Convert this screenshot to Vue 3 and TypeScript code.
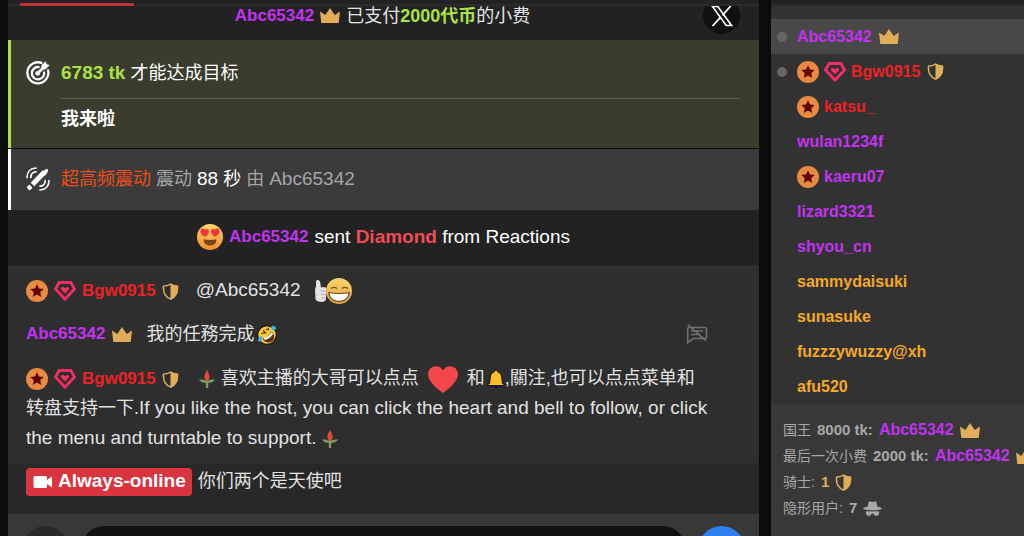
<script setup lang="ts">
interface User {
  name: string
  tone: 'purple' | 'red' | 'gold'
  dot?: boolean
  star?: boolean
  gem?: boolean
  role?: 'crown' | 'shield'
}

const users: User[] = [
  { name: 'Abc65342', tone: 'purple', dot: true, role: 'crown' },
  { name: 'Bgw0915', tone: 'red', dot: true, star: true, gem: true, role: 'shield' },
  { name: 'katsu_', tone: 'red', star: true },
  { name: 'wulan1234f', tone: 'purple' },
  { name: 'kaeru07', tone: 'purple', star: true },
  { name: 'lizard3321', tone: 'purple' },
  { name: 'shyou_cn', tone: 'purple' },
  { name: 'sammydaisuki', tone: 'gold' },
  { name: 'sunasuke', tone: 'gold' },
  { name: 'fuzzzywuzzy@xh', tone: 'gold' },
  { name: 'afu520', tone: 'gold' },
]
</script>

<template>
  <div class="page">
    <svg class="defs" aria-hidden="true">
      <symbol id="crown" viewBox="0 0 20 15">
        <path d="M0 3.500 5.300 7 10 0l4.700 7L20 3.500 18.700 15H1.300Z" fill="#e0ad58" />
      </symbol>
      <symbol id="shield" viewBox="0 0 17 17">
        <path d="M8.500 1.100c2.500 1.400 4.700 2 7 2.100.5 6-1.500 10.700-7 12.800C3 13.900 1 9.200 1.500 3.200c2.300-.1 4.500-.7 7-2.100Z" fill="none" stroke="#e0ad58" stroke-width="1.500" />
        <path d="M8.500.5c2.500 1.500 5 2 7.500 2.200.6 6.500-1.500 11.800-7.500 14Z" fill="#e0ad58" />
      </symbol>
      <symbol id="star" viewBox="0 0 22 22">
        <circle cx="11" cy="11" r="11" fill="#e88a41" />
        <path d="m11 4.300 2 4.200 4.700.5-3.500 3.200 1 4.700-4.200-2.300-4.200 2.300 1-4.700L4.300 9 9 8.500Z" fill="#620303" />
      </symbol>
      <symbol id="gem" viewBox="0 0 22 20">
        <path d="M5.200 1.500h11.600L20.500 8 11 18.200 1.500 8Z" fill="none" stroke="#f52e63" stroke-width="2.800" />
        <path d="M11 12.500 7 8.600C6 6.300 9.300 5 11 7.200c1.700-2.200 5-.9 4 1.400Z" fill="#f52e63" />
      </symbol>
      <symbol id="tulip" viewBox="0 0 16 18">
        <path d="M6.800 9h2.400v9H6.800Z" fill="#78a05b" />
        <path d="M0 9.500c3-.3 6 .3 8 1.500 2-1.200 5-1.800 8-1.500-1.500 2.500-4.500 3.700-8 3.500C4.500 13.200 1.500 12 0 9.500Z" fill="#78a05b" />
        <path d="M8 0c1.800 3 3.300 6 2.300 9L8 11.500 5.700 9C4.700 6 6.200 3 8 0Z" fill="#e2473d" />
      </symbol>
    </svg>

    <main class="chat">
      <div class="tabs"><span class="tab-active"></span></div>

      <section class="feed">
        <div class="row tip">
          <div class="tip-text">
            <a href="#" class="name purple">Abc65342</a>
            <svg class="i-crown"><use href="#crown" /></svg>
            <span>已支付<b class="lime">2000代币</b>的小费</span>
          </div>
          <button class="x-button" type="button" aria-label="X">
            <svg viewBox="0 0 24 24" width="24" height="24">
              <path d="M2.500 2.500h5.300L21.500 21.500h-5.300Z" fill="none" stroke="#fff" stroke-width="1.700" />
              <path d="m20.700 2-8.300 9.300M10.500 13.300 2.500 22" fill="none" stroke="#fff" stroke-width="1.800" />
            </svg>
          </button>
        </div>

        <div class="row notice goal">
          <svg class="notice-icon" viewBox="0 0 24 24">
            <g fill="none" stroke="#fff" stroke-width="2.300">
              <path d="M16.300 2.300A10.500 10.500 0 1 0 21.800 8.500" />
              <path d="M13.500 6.200A6.200 6.200 0 1 0 18 10.500" />
              <path d="M12 12 18.500 5.500" stroke-width="2.600" />
            </g>
            <circle cx="11.700" cy="12.300" r="2.400" fill="#fff" />
            <path d="m15 9 .6-5L19.800.2l.9 3 3 .9-4 4.100Z" fill="#fff" />
          </svg>
          <div class="notice-body">
            <p><b class="lime latin">6783 tk</b> 才能达成目标</p>
            <p class="goal-title">我来啦</p>
          </div>
        </div>

        <div class="row notice vibe">
          <svg class="notice-icon" viewBox="0 0 24 24">
            <path d="M6.500 17.500 18.500 5" fill="none" stroke="#fff" stroke-width="5" />
            <path d="M16 5.200 19.500 2.300c1.700-1.100 3.400.5 2.400 2.200L19.500 8.500Z" fill="#fff" />
            <path d="m3.400 17.600 3.200 3.200-2.300 2.100a1 1 0 0 1-1.400 0l-1.800-1.800a1 1 0 0 1 0-1.400Z" fill="#fff" />
            <g fill="none" stroke="#fff" stroke-width="1.700" stroke-linecap="round">
              <path d="M1 10.500C1 5 4.500 1.200 10 1M4.800 10.500c0-3.300 2.200-5.600 5.200-5.700" />
              <path d="M23 13.500c0 5.500-3.500 9.300-9 9.500M19.200 13.500c0 3.300-2.200 5.600-5.200 5.700" />
            </g>
          </svg>
          <p><span class="orange">超高频震动</span> 震动 <span class="white"><span class="latin">88</span> 秒</span> 由 <span class="latin">Abc65342</span></p>
        </div>

        <div class="row reaction">
          <svg class="i-face" viewBox="0 0 26 26">
            <defs>
              <linearGradient id="face" x2="0" y2="1">
                <stop offset="0" stop-color="#ffd864" />
                <stop offset="1" stop-color="#f28b35" />
              </linearGradient>
            </defs>
            <circle cx="13" cy="13" r="13" fill="url(#face)" />
            <path d="M8.500 12.700C5 11.500 3 9.500 3.500 6.500 4.200 3.800 7 4 7.900 5.800c1.500-1.600 4-.8 4.100 1.300.1 2.400-1.600 4.300-3.500 5.600ZM17.500 12.700c3.500-1.200 5.500-3.200 5-6.200-.7-2.700-3.500-2.500-4.400-.7-1.500-1.600-4-.8-4.100 1.300-.1 2.400 1.600 4.300 3.500 5.600Z" fill="#f1353b" />
            <path d="M6.800 15.200c4 1 8.400 1 12.400 0 .7 3.800-2.300 6.300-6.200 6.300s-6.900-2.500-6.200-6.300Z" fill="#7d4217" />
          </svg>
          <a href="#" class="name purple">Abc65342</a>
          <span class="latin">sent <b class="coral">Diamond</b> from Reactions</span>
        </div>

        <div class="row messages">
          <article class="message">
            <span class="author">
              <svg class="i-star"><use href="#star" /></svg>
              <svg class="i-gem"><use href="#gem" /></svg>
              <a href="#" class="name red">Bgw0915</a>
              <svg class="i-shield"><use href="#shield" /></svg>
            </span>
            <span class="latin">@Abc65342</span>
            <svg class="i-thumb" viewBox="0 0 38 27">
              <defs>
                <linearGradient id="grin" x2="0" y2="1">
                  <stop offset="0" stop-color="#fbd66c" />
                  <stop offset="1" stop-color="#e1a340" />
                </linearGradient>
              </defs>
              <path d="M1 12c0-2 1-2.500 1-4V4c0-3 4-2.500 4.200.5L7 9.500c4-1.500 6 .5 5.500 3l-.5 9c-.5 3.500-9 3-10.500 0Z" fill="#e2e2e2" />
              <path d="M7 13h5M7 16.500h5M7 20h5" stroke="#b5b5b5" stroke-width="1" />
              <circle cx="25" cy="13" r="13" fill="url(#grin)" />
              <path d="M17 10.500c2-1.500 4-1.500 6 0M28 10.500c2-1.500 4-1.500 6 0" fill="none" stroke="#79511b" stroke-width="1.400" />
              <path d="M14 14c7 1.200 15 1.200 22 0-.5 6-5 10-11 10s-10.500-4-11-10Z" fill="#6c421a" />
              <path d="M15.500 15.200c6 1 13 1 19 0-.9 5-4.500 7.600-9.500 7.600s-8.600-2.600-9.500-7.600Z" fill="#fff" />
            </svg>
          </article>

          <article class="message with-action">
            <div class="line">
              <a href="#" class="name purple">Abc65342</a>
              <svg class="i-crown"><use href="#crown" /></svg>
              <span class="line-text">我的任務完成<svg class="i-laugh" viewBox="0 0 20 20">
                <circle cx="10" cy="10" r="9.300" fill="#ffc83d" stroke="#16130d" stroke-width="1.200" />
                <path d="M5.500 13.500c4-.6 7.600-3.700 8.700-7.300 4 3.300 3.800 8.300.6 10.300-3.300 2-7.500.8-9.300-3Z" fill="#5a3314" />
                <path d="M6.500 13.300c4-1 6.700-3.200 8-6.200l1.500 2c-1.600 2.800-4.500 5-8 6Z" fill="#fff" />
                <path d="m4 8.500 4.500-.7-2.300-2.500M9 4.500l2.200.3.300-2.200" fill="none" stroke="#4c2a12" stroke-width="1.200" />
                <path d="M1 14.500c0-2 2-3.500 4-3 .6 2.500-.5 5-2.500 5.200C1.600 16.700 1 15.700 1 14.500ZM14.500 1.200c2-1 4.300.3 4.600 1.900.3 1.800-2.300 2.900-4.700 1.700Z" fill="#35b5e8" />
              </svg></span>
            </div>
            <button class="mute" type="button" aria-label="Mute">
              <svg viewBox="0 0 22 20" width="22" height="20">
                <path d="M3 3.500h16a1.500 1.500 0 0 1 1.500 1.500v8a1.500 1.500 0 0 1-1.500 1.500H7.500L1.700 18.500V5A1.500 1.500 0 0 1 3 3.500ZM5 7h12M5 10.500h9M2 .8l18 16" fill="none" stroke="#707070" stroke-width="1.700" />
              </svg>
            </button>
          </article>

          <article class="message">
            <span class="author">
              <svg class="i-star"><use href="#star" /></svg>
              <svg class="i-gem"><use href="#gem" /></svg>
              <a href="#" class="name red">Bgw0915</a>
              <svg class="i-shield"><use href="#shield" /></svg>
            </span>
            <svg class="i-tulip"><use href="#tulip" /></svg>
            <span>喜欢主播的大哥可以点点</span>
            <svg class="i-heart" viewBox="0 0 30 27">
              <path d="M15 27C8 22 0 15 0 8.200 0-.5 11.500-2.800 15 4.500 18.500-2.800 30-.5 30 8.200 30 15 22 22 15 27Z" fill="#f2484b" />
            </svg>
            <span>和</span><svg class="i-bell" viewBox="0 0 18 20">
              <path d="M9 1c1.300 0 1.900.8 1.900 1.800 3 .9 3.900 3.400 4 6.200l.5 4.700 1.600 1.500v1.500H1v-1.500l1.600-1.500L3.100 9c.1-2.800 1-5.300 4-6.200C7.100 1.800 7.700 1 9 1Z" fill="#fcbd2c" stroke="#17130b" stroke-width="1.200" />
              <path d="M6.500 17.200h5c-.3 2.400-4.700 2.400-5 0Z" fill="#17130b" />
            </svg><span>,關注,也可以点点菜单和</span><span>转盘支持一下.</span><span class="latin">If you like the host, you can click the heart and bell to follow, or click the menu and turntable to support.</span>
            <svg class="i-tulip"><use href="#tulip" /></svg>
          </article>
        </div>

        <div class="row status">
          <a href="#" class="badge latin">
            <svg viewBox="0 0 20 14" width="20" height="14">
              <path d="M2 1h10.500a1.500 1.500 0 0 1 1.500 1.500V5l5-3.500v11L14 9v2.500a1.500 1.500 0 0 1-1.500 1.500H2a1.500 1.500 0 0 1-1.500-1.500v-9A1.500 1.500 0 0 1 2 1Z" fill="#fff" />
            </svg>
            <span>Always-online</span>
          </a>
          <span>你们两个是天使吧</span>
        </div>
      </section>

      <form class="composer" @submit.prevent>
        <button class="round" type="button" aria-label="Menu"></button>
        <input class="entry" type="text" aria-label="Message" />
        <button class="round send" type="submit" aria-label="Send"></button>
      </form>
    </main>

    <aside class="side">
      <div class="side-top"></div>
      <ul class="users">
        <li v-for="user in users" :key="user.name" class="user">
          <span class="dot" :class="{ on: user.dot }"></span>
          <svg v-if="user.star" class="i-star"><use href="#star" /></svg>
          <svg v-if="user.gem" class="i-gem"><use href="#gem" /></svg>
          <a href="#" class="name" :class="user.tone">{{ user.name }}</a>
          <svg v-if="user.role" :class="'i-' + user.role"><use :href="'#' + user.role" /></svg>
        </li>
      </ul>
      <div class="summary">
        <p>国王 <b>8000 tk:</b> <a href="#" class="name purple">Abc65342</a><svg class="i-crown"><use href="#crown" /></svg></p>
        <p>最后一次小费 <b>2000 tk:</b> <a href="#" class="name purple">Abc65342</a><svg class="i-crown"><use href="#crown" /></svg></p>
        <p>骑士: <b class="amber">1</b><svg class="i-shield"><use href="#shield" /></svg></p>
        <p>隐形用户: <b>7</b><svg class="i-hat" viewBox="0 0 20 16">
          <path d="M6 .8C7.500-.2 8.500 1 10 1s2.500-1.200 4-.2L15.300 6c2.700.4 4.700 1 4.700 1.800C20 9 16 10 10 10S0 9 0 7.800C0 7 2 6.400 4.700 6Z" fill="#a8a8a8" />
          <path d="M3 11.200c2-.5 4.500-.5 6 0h2c1.500-.5 4-.5 6 0v1.500c0 4-5.500 4-6 .6H9c-.5 3.400-6 3.400-6-.6Z" fill="#a8a8a8" />
        </svg></p>
      </div>
    </aside>
  </div>
</template>

<style>
html,
body {
  margin: 0;
  background: #0b0b0b;
}
</style>

<style scoped>
.page {
  display: grid;
  grid-template-columns: minmax(0, 1fr) 253px;
  column-gap: 12px;
  padding-left: 8px;
  height: 100vh;
  box-sizing: border-box;
  overflow: hidden;
  color: #e2e2e2;
  font-family: "Liberation Sans", Arial, "Noto Sans CJK SC", sans-serif;
  font-size: 18px;
  line-height: 30px;
}
.defs { position: absolute; width: 0; height: 0; }
p, ul { margin: 0; padding: 0; }
button, input { border: 0; padding: 0; font: inherit; color: inherit; }
svg { flex: none; }

.chat {
  display: flex;
  flex-direction: column;
  min-height: 0;
  overflow: hidden;
}
.tabs {
  display: flex;
  align-items: flex-end;
  flex: none;
  height: 6px;
  padding-left: 12px;
  background: linear-gradient(#222 4px, #2b2b2b 4px);
}
.tab-active { width: 114px; height: 3px; background: #c23037; }
.feed {
  display: flex;
  flex: 1;
  flex-direction: column;
  justify-content: flex-end;
  min-height: 0;
  overflow: hidden;
}
.row { flex: none; }

.latin { font-size: 19px; }
.name { font-size: 17px; font-weight: bold; text-decoration: none; }
.purple { color: #c233f0; }
.red { color: #ed2225; }
.gold { color: #f5a828; }
.lime { color: #aae246; }
.coral { color: #ee4b57; }
.orange { color: #f04e14; }
.white { color: #fff; }

.i-crown { width: 20px; height: 15px; }
.i-shield { width: 17px; height: 17px; }
.i-star { width: 22px; height: 22px; }
.i-gem { width: 22px; height: 20px; }
.i-face { width: 26px; height: 26px; }
.i-thumb { width: 38px; height: 27px; margin-left: 13px; }
.i-laugh { width: 20px; height: 20px; margin-left: 3px; }
.i-tulip { width: 16px; height: 18px; margin: 0 6px 0 3px; }
.latin + .i-tulip { margin-left: 6px; }
.i-heart { width: 30px; height: 27px; margin: 0 9px; }
.i-bell { width: 18px; height: 20px; margin-left: 2px; }
.i-hat { width: 19px; height: 15px; }

.tip {
  display: flex;
  align-items: center;
  padding: 6px 19px 6px 54px;
  background: #222;
}
.tip-text {
  display: flex;
  align-items: center;
  justify-content: center;
  flex: 1;
  gap: 6px;
}
.x-button {
  display: grid;
  place-items: center;
  width: 37px;
  height: 37px;
  border-radius: 50%;
  background: #101010;
}

.notice {
  display: flex;
  gap: 11px;
  padding: 18px 19px 14px 15px;
  border-left: 3px solid;
}
.notice-icon { width: 24px; height: 24px; margin-top: 3px; }
.notice-body { flex: 1; }
.goal {
  color: #fff;
  background: #3a3c2d;
  border-color: #aadd4d;
}
.goal-title {
  margin-top: 10px;
  padding-top: 5px;
  border-top: 1px solid #5a5e4d;
  font-weight: bold;
}
.vibe {
  margin-top: 1px;
  padding: 15px 19px 16px 15px;
  background: #3b3b3b;
  border-color: #fff;
  color: #a6a6a6;
}
.reaction {
  display: flex;
  align-items: center;
  justify-content: center;
  gap: 6px;
  padding: 12px 18px 14px;
  background: #222;
  color: #fff;
}

.messages {
  padding: 1px 18px 2px;
  border-top: 1px solid #383838;
  background: #2e2e2e;
}
.message { padding: 7px 30px 7px 0; }
.message svg, .author { vertical-align: middle; }
.author {
  display: inline-flex;
  align-items: center;
  gap: 6px;
  height: 24px;
  margin-right: 17px;
}
.with-action {
  display: flex;
  align-items: center;
  justify-content: space-between;
  padding-right: 33px;
}
.line { display: flex; align-items: center; gap: 7px; }
.line-text { margin-left: 7px; }
.mute { display: flex; background: none; }

.status {
  display: flex;
  align-items: flex-start;
  gap: 6px;
  padding: 5px 18px 18px;
  border-top: 1px solid #323232;
  background: #282828;
  line-height: 26px;
}
.badge {
  display: flex;
  align-items: center;
  gap: 5px;
  height: 28px;
  padding: 0 6px 0 7px;
  border-radius: 4px;
  background: #da343f;
  color: #fff;
  font-weight: bold;
  text-decoration: none;
}
.badge span { padding-bottom: 2px; }

.composer {
  display: flex;
  flex: none;
  gap: 12px;
  height: 10px;
  padding: 12px 14px 0;
  background: #383838;
}
.round {
  flex: none;
  width: 47px;
  height: 47px;
  border-radius: 50%;
  background: #292929;
}
.send { background: #2d80ed; }
.entry {
  flex: 1;
  min-width: 0;
  height: 47px;
  padding: 0 24px;
  border-radius: 24px;
  background: #111;
}

.side {
  display: flex;
  flex-direction: column;
  min-width: 0;
  overflow: hidden;
  background: #383838;
}
.side .name { font-size: 16px; }
.side-top {
  flex: none;
  height: 4px;
  border-bottom: 2px solid #2b2b2b;
  background: #222;
}
.users {
  padding-top: 13px;
  background: #323232;
  list-style: none;
}
.user {
  display: flex;
  align-items: center;
  gap: 5px;
  height: 35px;
  padding: 0 6px;
}
.user:first-child { background: #484848; }
.user .i-crown, .user .i-shield { margin-left: 2px; }
.dot {
  width: 10px;
  height: 10px;
  margin-right: 5px;
  border-radius: 50%;
}
.on { background: #666; }
.summary {
  padding: 13px 0 0 12px;
  color: #a8a8a8;
  font-size: 14px;
  line-height: 26px;
}
.summary p {
  display: flex;
  align-items: center;
  gap: 6px;
  white-space: nowrap;
}
.summary b { font-size: 15px; }
.summary .amber { color: #e0ad58; }
</style>
